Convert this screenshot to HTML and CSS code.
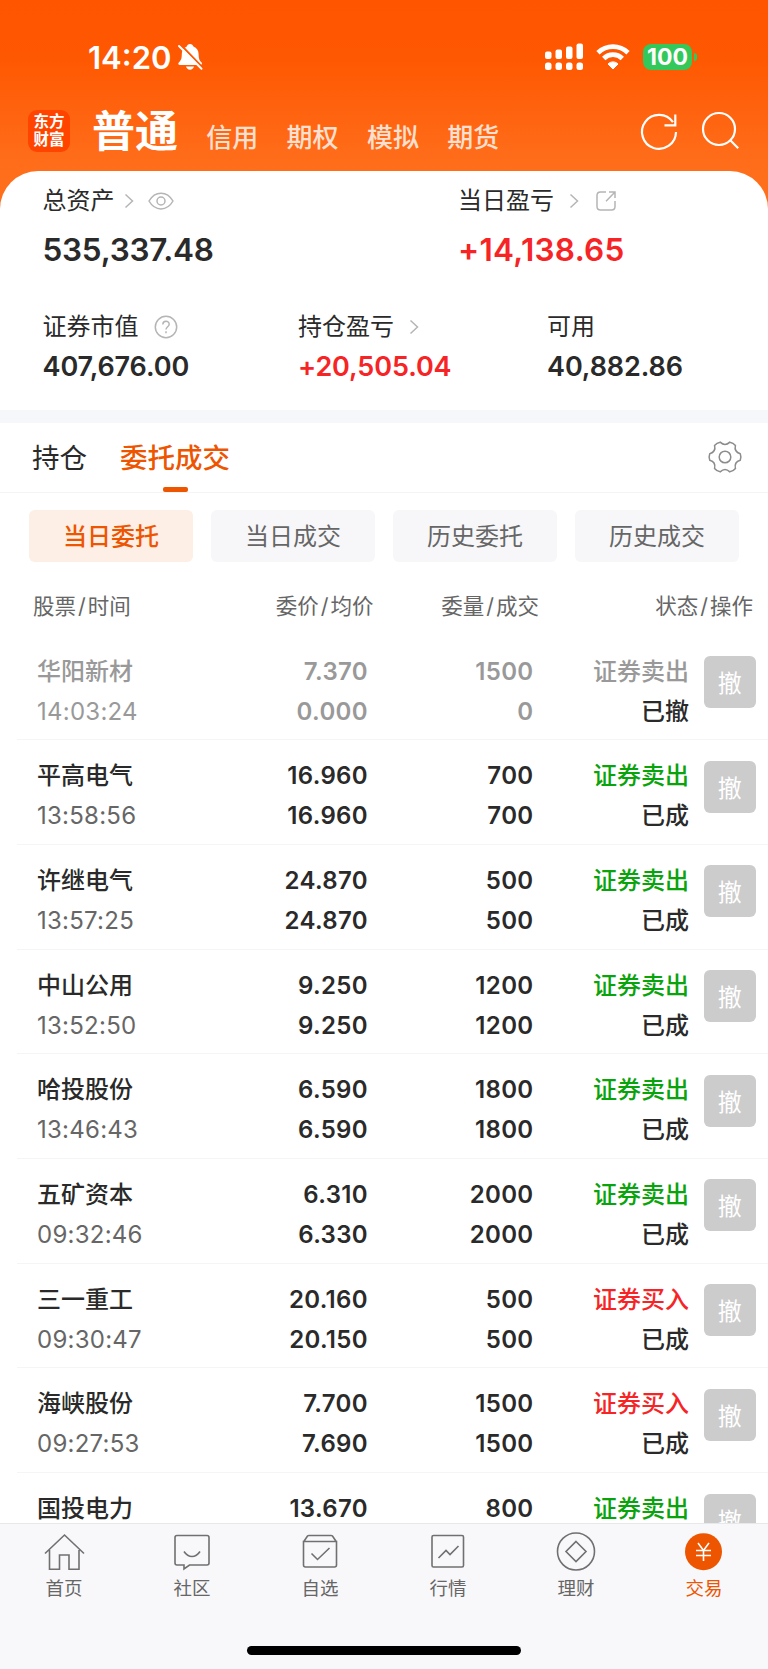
FILE: index.html
```html
<!DOCTYPE html>
<html lang="zh-CN">
<head>
    <meta charset="UTF-8">
    <meta name="viewport" content="width=device-width, initial-scale=1.0">
    <title>交易</title>
    <link rel="stylesheet" href="styles.css">
</head>
<body>
    <header class="header">
        <div class="status-bar">
            <span class="clock">14:20</span>
            <svg class="bell" width="26" height="28" viewBox="0 0 26 28">
                <path d="M13 1c1.800 0 3 1 3.400 2.500 3.500 1.200 5.100 4 5.200 7.500.1 5 .9 6.500 3 8.500.7.900.4 2.500-1 2.500H3c-1.600 0-2.200-1.500-1.200-2.500 2.200-2 3-4 3-8.500 0-3.500 1.600-6.300 5-7.500C10.200 2 11.200 1 13 1z" fill="#fff"/>
                <path d="M9 23.500h8c-.5 2-2 3.200-4 3.200s-3.500-1.200-4-3.200z" fill="#fff"/>
                <path d="M3.500 1.500l22 23" stroke="#ff5803" stroke-width="2"/>
                <path d="M2 3l22.500 22.700" stroke="#fff" stroke-width="2" stroke-linecap="round"/>
            </svg>
            <div class="status-icons">
                <svg width="38" height="28" viewBox="0 0 38 28" fill="#fff">
                    <rect x="0" y="8.500" width="6.500" height="7.500" rx="2"/>
                    <rect x="10.500" y="6.500" width="6.500" height="9.500" rx="2"/>
                    <rect x="21" y="3.500" width="6.500" height="12.500" rx="2"/>
                    <rect x="31.500" y="0.500" width="6.500" height="15.500" rx="2"/>
                    <rect x="0" y="19.500" width="6.500" height="7.500" rx="2.500"/>
                    <rect x="10.500" y="19.500" width="6.500" height="7.500" rx="2.500"/>
                    <rect x="21" y="19.500" width="6.500" height="7.500" rx="2.500"/>
                    <rect x="31.500" y="19.500" width="6.500" height="7.500" rx="2.500"/>
                </svg>
                <svg class="wifi" width="34" height="26" viewBox="0 0 34 26">
                    <path d="M2 8.700c8.500-8 21.500-8 30 0M7.700 14.400c5.300-5 13.300-5 18.600 0" fill="none" stroke="#fff" stroke-width="4.800"/>
                    <path d="M17 25l-5-5c2.800-2.800 7.200-2.800 10 0z" fill="#fff" stroke="#fff" stroke-linejoin="round"/>
                </svg>
                <span class="battery">100</span>
                <span class="battery-cap"></span>
            </div>
        </div>
        <nav class="account-nav">
            <a class="logo" href="#">东方<br>财富</a>
            <a class="account active" href="#">普通</a>
            <a class="account" href="#">信用</a>
            <a class="account" href="#">期权</a>
            <a class="account" href="#">模拟</a>
            <a class="account" href="#">期货</a>
            <div class="nav-icons">
                <svg width="40" height="40" viewBox="0 0 40 40" fill="none" stroke="#fff" stroke-width="2.200">
                    <path d="M37 21A17 17 0 1 1 34 11.200M36.300 3.500v10.800H25.500"/>
                </svg>
                <svg width="40" height="40" viewBox="0 0 40 40" fill="none" stroke="#fff" stroke-width="2.200">
                    <circle cx="19" cy="18" r="16"/>
                    <path d="M30.300 29.300l7.900 7.900"/>
                </svg>
            </div>
        </nav>
    </header>

    <section class="assets">
        <div class="asset-row top">
            <div class="asset">
                <div class="asset-label"><span>总资产</span>
                    <svg class="chevron" width="10" height="16" viewBox="0 0 10 16"><path d="M1.500 1.500L8.500 8l-7 6.500"/></svg>
                    <svg class="eye" width="26" height="18" viewBox="0 0 26 18"><path d="M1 9c6-10.500 18-10.500 24 0-6 10.500-18 10.500-24 0z"/><circle cx="13" cy="9" r="4"/></svg>
                </div>
                <div class="asset-value">535,337.48</div>
            </div>
            <div class="asset">
                <div class="asset-label"><span>当日盈亏</span>
                    <svg class="chevron wide" width="10" height="16" viewBox="0 0 10 16"><path d="M1.500 1.500L8.500 8l-7 6.500"/></svg>
                    <svg class="share" width="20" height="20" viewBox="0 0 20 20"><path d="M10 1H4.500Q1 1 1 4.500v11Q1 19 4.500 19h11q3.500 0 3.500-3.500V10M13 1h6v6M19 1l-9 9.300"/></svg>
                </div>
                <div class="asset-value red">+14,138.65</div>
            </div>
        </div>
        <div class="asset-row bottom">
            <div class="asset">
                <div class="asset-label"><span>证券市值</span>
                    <svg class="help" width="24" height="24" viewBox="0 0 24 24"><circle cx="12" cy="12" r="10.700"/><path d="M8.800 9.500c0-4.300 6.400-4.300 6.400-.3 0 2.500-3.200 2.600-3.200 5.300M12 16.300v2"/></svg>
                </div>
                <div class="asset-value">407,676.00</div>
            </div>
            <div class="asset">
                <div class="asset-label"><span>持仓盈亏</span>
                    <svg class="chevron wide" width="10" height="16" viewBox="0 0 10 16"><path d="M1.500 1.500L8.500 8l-7 6.500"/></svg>
                </div>
                <div class="asset-value red">+20,505.04</div>
            </div>
            <div class="asset">
                <div class="asset-label"><span>可用</span></div>
                <div class="asset-value">40,882.86</div>
            </div>
        </div>
    </section>

    <nav class="tabs">
        <a class="tab" href="#">持仓</a>
        <a class="tab active" href="#">委托成交</a>
        <svg class="gear" width="34" height="34" viewBox="-17 -17 34 34">
            <path d="M15.260 3.240Q8.830 5.100 10.440 11.590Q8.250 14.300 4.820 14.840Q0 10.200-4.820 14.840Q-8.250 14.300-10.440 11.590Q-8.830 5.100-15.260 3.240Q-16.500 0-15.260-3.240Q-8.830-5.100-10.440-11.590Q-8.250-14.300-4.820-14.840Q0-10.200 4.820-14.840Q8.250-14.300 10.440-11.590Q8.830-5.100 15.260-3.240Q16.500 0 15.260 3.240z"/>
            <circle r="5.800"/>
        </svg>
    </nav>

    <div class="filters">
        <a class="filter active" href="#">当日委托</a>
        <a class="filter" href="#">当日成交</a>
        <a class="filter" href="#">历史委托</a>
        <a class="filter" href="#">历史成交</a>
    </div>

    <div class="list-head">
        <span>股票<i>/</i>时间</span>
        <span>委价<i>/</i>均价</span>
        <span>委量<i>/</i>成交</span>
        <span>状态<i>/</i>操作</span>
    </div>

    <main class="orders">
        <div class="order cancelled">
            <div class="stock">华阳新材<small>14:03:24</small></div>
            <div class="num">7.370<br>0.000</div>
            <div class="num">1500<br>0</div>
            <div class="state"><span>证券卖出</span><br>已撤</div>
            <button class="cancel-btn">撤</button>
        </div>
        <div class="order">
            <div class="stock">平高电气<small>13:58:56</small></div>
            <div class="num">16.960<br>16.960</div>
            <div class="num">700<br>700</div>
            <div class="state"><span class="sell">证券卖出</span><br>已成</div>
            <button class="cancel-btn">撤</button>
        </div>
        <div class="order">
            <div class="stock">许继电气<small>13:57:25</small></div>
            <div class="num">24.870<br>24.870</div>
            <div class="num">500<br>500</div>
            <div class="state"><span class="sell">证券卖出</span><br>已成</div>
            <button class="cancel-btn">撤</button>
        </div>
        <div class="order">
            <div class="stock">中山公用<small>13:52:50</small></div>
            <div class="num">9.250<br>9.250</div>
            <div class="num">1200<br>1200</div>
            <div class="state"><span class="sell">证券卖出</span><br>已成</div>
            <button class="cancel-btn">撤</button>
        </div>
        <div class="order">
            <div class="stock">哈投股份<small>13:46:43</small></div>
            <div class="num">6.590<br>6.590</div>
            <div class="num">1800<br>1800</div>
            <div class="state"><span class="sell">证券卖出</span><br>已成</div>
            <button class="cancel-btn">撤</button>
        </div>
        <div class="order">
            <div class="stock">五矿资本<small>09:32:46</small></div>
            <div class="num">6.310<br>6.330</div>
            <div class="num">2000<br>2000</div>
            <div class="state"><span class="sell">证券卖出</span><br>已成</div>
            <button class="cancel-btn">撤</button>
        </div>
        <div class="order">
            <div class="stock">三一重工<small>09:30:47</small></div>
            <div class="num">20.160<br>20.150</div>
            <div class="num">500<br>500</div>
            <div class="state"><span class="buy">证券买入</span><br>已成</div>
            <button class="cancel-btn">撤</button>
        </div>
        <div class="order">
            <div class="stock">海峡股份<small>09:27:53</small></div>
            <div class="num">7.700<br>7.690</div>
            <div class="num">1500<br>1500</div>
            <div class="state"><span class="buy">证券买入</span><br>已成</div>
            <button class="cancel-btn">撤</button>
        </div>
        <div class="order">
            <div class="stock">国投电力</div>
            <div class="num">13.670</div>
            <div class="num">800</div>
            <div class="state"><span class="sell">证券卖出</span></div>
            <button class="cancel-btn">撤</button>
        </div>
    </main>

    <footer class="tabbar">
        <div class="tabbar-items">
            <a class="tabbar-item" href="#">
                <svg width="40" height="40" viewBox="0 0 40 40"><path d="M1 20.500L20.500 2 40 20.500M5.500 17v19.300h10V22h9.500v14.300h10V17"/></svg>
                首页
            </a>
            <a class="tabbar-item" href="#">
                <svg width="40" height="40" viewBox="0 0 40 40"><path d="M5 2.500h30q2 0 2 2V30q0 2-2 2H17.500L12 36v-4H5q-2 0-2-2V4.500q0-2 2-2zM12 18.500c4.500 6.700 11.500 6.700 16 0"/></svg>
                社区
            </a>
            <a class="tabbar-item" href="#">
                <svg width="40" height="40" viewBox="0 0 40 40"><path d="M3.500 9L7.500 3Q8 2.500 9 2.500h22q1 0 1.500.5l4 6M3.500 8.500h33V32q0 2-2 2h-29q-2 0-2-2zM11.500 20.500l6 6L29.500 15"/></svg>
                自选
            </a>
            <a class="tabbar-item" href="#">
                <svg width="40" height="40" viewBox="0 0 40 40"><rect x="4" y="2.500" width="31.500" height="31.500" rx="1.500"/><path d="M10.500 25l7.500-7.500 4 4 8.500-8.500"/></svg>
                行情
            </a>
            <a class="tabbar-item" href="#">
                <svg width="40" height="40" viewBox="0 0 40 40"><circle cx="20" cy="18.500" r="18.500"/><path d="M20 8.500l10 10-10 10-10-10z"/></svg>
                理财
            </a>
            <a class="tabbar-item active" href="#">
                <svg width="40" height="40" viewBox="0 0 40 40"><circle class="coin" cx="19.500" cy="18.700" r="18.500"/><path class="yen" d="M14 10l5.500 7.500L25 10M12 17.500h15M12 22.500h15M19.500 17.500V28"/></svg>
                交易
            </a>
        </div>
        <div class="home-indicator"></div>
    </footer>
</body>
</html>
```
FILE: styles.css
```css
* {
    box-sizing: border-box;
}

body {
    margin: 0;
    width: 768px;
    height: 1669px;
    overflow: hidden;
    display: flex;
    flex-direction: column;
    font-family: Inter, "Noto Sans CJK SC", sans-serif;
    color: #2a2a2a;
    background: linear-gradient(#ff5500 0, #ff5802 60px, #ff6d1a 160px, #ff701c 215px, #fff 216px);
}

a {
    color: inherit;
    text-decoration: none;
}

svg {
    display: block;
    flex-shrink: 0;
    overflow: visible;
}

/* Header */
.header {
    height: 171px;
    color: #fff;
}

.status-bar {
    display: flex;
    align-items: center;
    height: 112px;
    padding: 2px 71px 0 88px;
}

.clock {
    font-size: 31px;
    font-weight: 600;
}

.bell {
    margin-left: 6px;
}

.status-icons {
    display: flex;
    align-items: center;
    margin-left: auto;
}

.wifi {
    margin-left: 13px;
}

.battery {
    width: 49px;
    height: 26px;
    margin-left: 13px;
    border-radius: 8px;
    background: #34c759;
    font-size: 23px;
    font-weight: 700;
    line-height: 26px;
    text-align: center;
}

.battery-cap {
    width: 3px;
    height: 8px;
    margin-left: 2px;
    border-radius: 0 4px 4px 0;
    background: #34c759;
}

.account-nav {
    display: flex;
    height: 38px;
    align-items: center;
    padding-left: 28px;
}

.logo {
    width: 42px;
    height: 42px;
    padding-top: 3px;
    border-radius: 9px;
    background: #ff4400;
    font-size: 15.500px;
    font-weight: 700;
    line-height: 18px;
    text-align: center;
}

.account {
    padding-top: 14px;
    margin-left: 28.300px;
    font-size: 26px;
    font-weight: 500;
    line-height: 34px;
    color: #ffe0d0;
}

.account.active {
    padding-top: 0;
    margin-left: 22px;
    font-size: 43px;
    font-weight: 700;
    color: #fff;
}

.nav-icons {
    display: flex;
    gap: 21px;
    margin-left: auto;
    margin-right: 28px;
}

/* Assets */
.assets {
    height: 251.500px;
    padding: 15px 43px 0 42.500px;
    border-bottom: 13.500px solid #f6f7fa;
    border-radius: 38px 38px 0 0;
    background: #fff;
}

.asset-row {
    display: grid;
}

.asset-row.top {
    grid-template-columns: 415.500px 1fr;
}

.asset-row.bottom {
    grid-template-columns: 255.500px 249px 1fr;
    margin-top: 42px;
}

.asset-label {
    display: flex;
    align-items: center;
    height: 30px;
    font-size: 24px;
    white-space: nowrap;
}

.asset-label span {
    height: 30px;
    line-height: 29px;
}

.asset-label svg {
    fill: none;
    stroke: #b5b5b5;
    stroke-width: 1.500;
}

.asset-label .chevron {
    margin-left: 9px;
}

.asset-label .chevron.wide {
    margin-left: 15px;
}

.asset-label .eye {
    margin-left: 14px;
}

.asset-label .share {
    margin-left: 17px;
}

.asset-label .help {
    margin-left: 15px;
}

.asset-value {
    font-weight: 600;
    line-height: 40px;
}

.top .asset-value {
    margin-top: 14px;
    font-size: 31.500px;
    letter-spacing: -0.250px;
}

.top .asset-value.red {
    letter-spacing: 0.300px;
}

.bottom .asset-value {
    margin-top: 5px;
    font-size: 27px;
    letter-spacing: -0.100px;
}

.red {
    color: #f72426;
}

/* Tabs */
.tabs {
    display: flex;
    align-items: center;
    height: 70px;
    padding: 0 26px 0 32px;
    border-bottom: 1.500px solid #f4f4f5;
    background: #fff;
}

.tab {
    position: relative;
    height: 70px;
    font-size: 27.500px;
    line-height: 72px;
}

.tab.active {
    margin-left: 33px;
    font-weight: 500;
    color: #ed5500;
}

.tab.active::after {
    content: "";
    position: absolute;
    left: 50%;
    bottom: 0;
    width: 25px;
    height: 5px;
    margin-left: -12.500px;
    border-radius: 2px;
    background: #ed5500;
}

.gear {
    margin-left: auto;
    fill: none;
    stroke: #8c8c8c;
    stroke-width: 1.500;
}

/* Filters */
.filters {
    display: grid;
    grid-template-columns: repeat(4, 1fr);
    gap: 18px;
    padding: 17.500px 29px 0;
    background: #fff;
}

.filter {
    height: 52px;
    border-radius: 6px;
    background: #f7f7fa;
    color: #666;
    font-size: 24px;
    line-height: 54px;
    text-align: center;
}

.filter.active {
    background: #fdeee6;
    color: #ed5500;
    font-weight: 500;
}

/* Order list */
.list-head {
    display: grid;
    grid-template-columns: 1fr 165.500px 165.500px 214px;
    height: 73.500px;
    padding: 8px 15px 0 33px;
    background: #fff;
    color: #666;
    font-size: 21.500px;
    line-height: 73px;
    text-align: right;
}

.list-head span:first-child {
    text-align: left;
}

.list-head i {
    padding: 0 2px;
    font-style: normal;
}

.orders {
    flex: 1;
    min-height: 0;
    overflow: hidden;
    background: #fff;
}

.order {
    display: grid;
    grid-template-columns: 1fr 165px 165.500px 155.500px 67px;
    height: 104.700px;
    margin-left: 17px;
    padding: 16px 12px 0 20px;
    border-bottom: 1.500px solid #f5f5f6;
    font-size: 24px;
    font-weight: 500;
    line-height: 40px;
}

.stock small {
    display: block;
    color: #666;
    font-size: 24px;
    font-weight: 400;
    letter-spacing: 0.250px;
}

.num {
    font-weight: 600;
    letter-spacing: 0.350px;
    text-align: right;
}

.state {
    text-align: right;
}

.sell {
    color: #09a30b;
}

.buy {
    color: #f72426;
}

.cancelled .stock,
.cancelled .stock small,
.cancelled .num,
.cancelled .state span {
    color: #999;
}

.cancel-btn {
    justify-self: end;
    width: 52.500px;
    height: 52px;
    margin: 4.500px 0 0;
    padding: 0;
    border: 0;
    border-radius: 6px;
    background: #ccc;
    color: #fff;
    font: 24px/50px "Noto Sans CJK SC", sans-serif;
}

/* Bottom bar */
.tabbar {
    display: flex;
    flex-direction: column;
    align-items: center;
    height: 146px;
    border-top: 1.500px solid #e7e8ea;
    background: #f8f8fb;
}

.tabbar-items {
    display: grid;
    grid-template-columns: repeat(6, 1fr);
    width: 100%;
    padding-top: 9px;
}

.tabbar-item {
    display: flex;
    flex-direction: column;
    align-items: center;
    color: #666;
    font-size: 18.500px;
    line-height: 30px;
}

.tabbar-item svg {
    fill: none;
    stroke: #707070;
    stroke-width: 1.600;
}

.tabbar-item.active {
    color: #ed5500;
}

.tabbar-item .coin {
    fill: #ed5500;
    stroke: none;
}

.tabbar-item .yen {
    stroke: #fff;
}

.home-indicator {
    width: 274px;
    height: 9px;
    margin-top: 43px;
    border-radius: 5px;
    background: #000;
}
```
